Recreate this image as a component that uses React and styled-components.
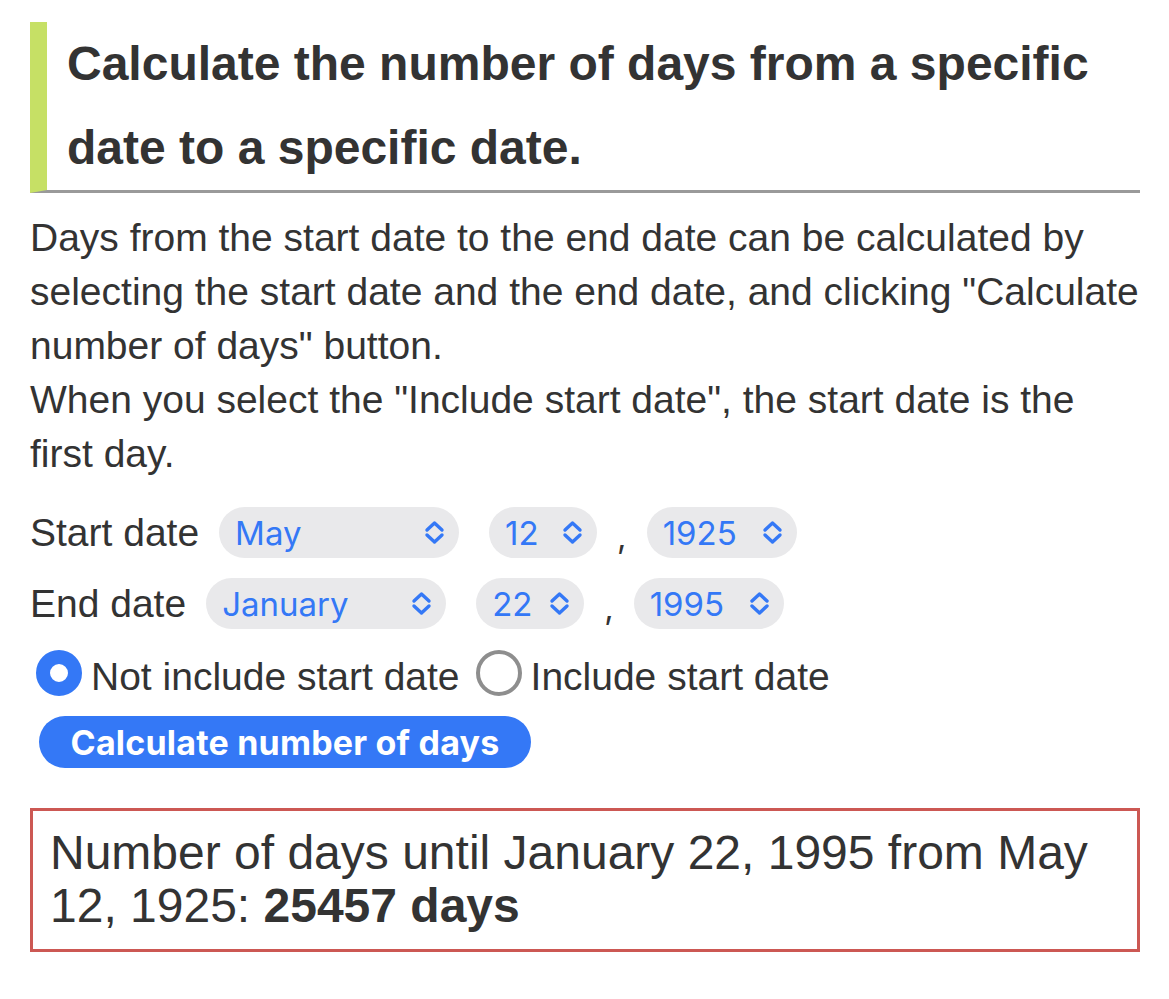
import React from "react";
import styled, { createGlobalStyle } from "styled-components";

const Global = createGlobalStyle`
  html, body { margin: 0; padding: 0; background: #fff; }
  body { font-family: "Liberation Sans", Arial, sans-serif; color: #333; }
`;

const Page = styled.div`
  width: 1110px;
  padding: 22px 29px 40px 30px;
`;

const Heading = styled.h2`
  margin: 0;
  font-size: 48px;
  line-height: 84px;
  font-weight: 700;
  color: #333;
  border-left: 17px solid #c6e065;
  border-bottom: 3px solid #9a9a9a;
  padding-left: 20px;
`;

const Paragraph = styled.p`
  margin: 18px -8px 0 0;
  font-size: 39px;
  line-height: 54px;
`;

const Form = styled.div`
  display: flex;
  flex-direction: column;
  margin-top: 16px;
`;

const Row = styled.div`
  display: flex;
  align-items: center;
  height: 71px;
  gap: 20px;
  font-size: 39px;
`;

const Label = styled.span`
  font-size: 39px;
`;

const Select = styled.div`
  box-sizing: border-box;
  width: ${(p) => p.$w}px;
  height: 51px;
  margin-right: ${(p) => p.$mr || 0}px;
  border-radius: 26px;
  background: #e9e9eb;
  display: flex;
  align-items: center;
  justify-content: space-between;
  padding: 0 14px 0 16px;
  color: #3478f6;
  font-family: Inter, "Liberation Sans", sans-serif;
  font-size: 33px;
`;

const Comma = styled.span`
  font-family: Inter, "Liberation Sans", sans-serif;
  font-size: 33px;
  color: #333;
  margin-top: 6px;
`;

const RadioRow = styled.div`
  display: flex;
  align-items: center;
  height: 68px;
  padding-left: 6px;
  font-size: 39px;
`;

const RadioLabel = styled.label`
  display: flex;
  align-items: center;
  gap: 9px;
  margin-right: 16px;
`;

const RadioText = styled.span`
  padding-top: 8px;
`;

const RadioCircle = styled.span`
  box-sizing: border-box;
  width: 46px;
  height: 46px;
  border-radius: 50%;
  border: ${(p) => (p.$on ? "14px solid #3478f6" : "4px solid #8e8e8e")};
  background: #fff;
  flex: none;
`;

const Button = styled.button`
  align-self: flex-start;
  margin: 9px 0 0 9px;
  width: 492px;
  height: 52px;
  border: none;
  border-radius: 26px;
  background: #3478f6;
  color: #fff;
  font-family: Inter, "Liberation Sans", sans-serif;
  font-weight: 700;
  font-size: 34px;
  letter-spacing: 0.2px;
  padding: 0;
`;

const Result = styled.div`
  margin-top: 40px;
  border: 3px solid #cc5853;
  padding: 15px 15px 17px 17px;
  font-size: 48px;
  line-height: 53px;
  color: #333;
`;

const Chevron = () => (
  <svg width="21" height="25" viewBox="0 0 21 25" fill="none" stroke="#3478f6" strokeWidth="3.4" strokeLinecap="round" strokeLinejoin="round">
    <path d="M3 10 L10.5 3 L18 10" />
    <path d="M3 15 L10.5 22 L18 15" />
  </svg>
);

const DateRow = ({ label, month, day, year }) => (
  <Row>
    <Label>{label}</Label>
    <Select $w={240} $mr={10}>
      <span>{month}</span>
      <Chevron />
    </Select>
    <Select $w={108}>
      <span>{day}</span>
      <Chevron />
    </Select>
    <Comma>,</Comma>
    <Select $w={150}>
      <span>{year}</span>
      <Chevron />
    </Select>
  </Row>
);

export default function App() {
  return (
    <>
      <Global />
      <Page>
        <Heading>Calculate the number of days from a specific date to a specific date.</Heading>
        <Paragraph>
          Days from the start date to the end date can be calculated by selecting the start date and the end date, and clicking "Calculate number of days" button.
          <br />
          When you select the "Include start date", the start date is the first day.
        </Paragraph>
        <Form>
          <DateRow label="Start date" month="May" day="12" year="1925" />
          <DateRow label="End date" month="January" day="22" year="1995" />
          <RadioRow>
            <RadioLabel>
              <RadioCircle $on />
              <RadioText>Not include start date</RadioText>
            </RadioLabel>
            <RadioLabel>
              <RadioCircle />
              <RadioText>Include start date</RadioText>
            </RadioLabel>
          </RadioRow>
          <Button>Calculate number of days</Button>
        </Form>
        <Result>
          Number of days until January 22, 1995 from May 12, 1925: <b>25457 days</b>
        </Result>
      </Page>
    </>
  );
}
